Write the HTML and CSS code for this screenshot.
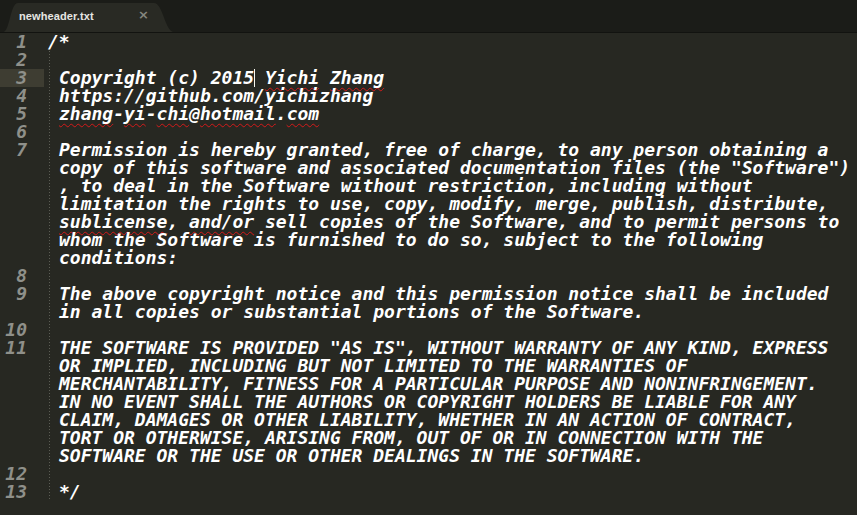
FILE: index.html
```html
<!DOCTYPE html>
<html>
<head>
<meta charset="utf-8">
<link rel="stylesheet" href="styles.css">
</head>
<body>
<div class="window">
  <div class="tabbar">
    <div class="tab">
      <svg class="tab-shape" width="176" height="29" viewBox="0 0 176 29">
        <path d="M2,29 C9,29 9,0 17,0 L153,0 C162,0 164,29 173,29 Z" fill="#292a24"/>
      </svg>
      <span class="tab-title">newheader.txt</span>
      <span class="tab-close">×</span>
    </div>
  </div>
  <div class="editor">
    <div class="ln">1</div><div class="code first"><div class="vl">/*</div></div>
    <div class="ln">2</div><div class="code guide"><div class="vl"> </div></div>
    <div class="ln current">3</div><div class="code guide"><div class="vl">Copyright (c) 2015<span class="caret"></span> <span class="sp">Yichi</span> <span class="sp">Zhang</span></div></div>
    <div class="ln">4</div><div class="code guide"><div class="vl">https://github.com/yichizhang</div></div>
    <div class="ln">5</div><div class="code guide"><div class="vl"><span class="sp">zhang</span>-<span class="sp">yi</span>-<span class="sp">chi</span>@<span class="sp">hotmail</span>.<span class="sp">com</span></div></div>
    <div class="ln">6</div><div class="code guide"><div class="vl"> </div></div>
    <div class="ln">7</div><div class="code guide">
      <div class="vl">Permission is hereby granted, free of charge, to any person obtaining a</div>
      <div class="vl">copy of this software and associated documentation files (the "Software")</div>
      <div class="vl">, to deal in the Software without restriction, including without</div>
      <div class="vl">limitation the rights to use, copy, modify, merge, publish, distribute,</div>
      <div class="vl"><span class="sp">sublicense</span>, <span class="sp">and/or</span> sell copies of the Software, and to permit persons to</div>
      <div class="vl">whom the Software is furnished to do so, subject to the following</div>
      <div class="vl">conditions:</div>
    </div>
    <div class="ln">8</div><div class="code guide"><div class="vl"> </div></div>
    <div class="ln">9</div><div class="code guide">
      <div class="vl">The above copyright notice and this permission notice shall be included</div>
      <div class="vl">in all copies or substantial portions of the Software.</div>
    </div>
    <div class="ln">10</div><div class="code guide"><div class="vl"> </div></div>
    <div class="ln">11</div><div class="code guide">
      <div class="vl">THE SOFTWARE IS PROVIDED "AS IS", WITHOUT WARRANTY OF ANY KIND, EXPRESS</div>
      <div class="vl">OR IMPLIED, INCLUDING BUT NOT LIMITED TO THE WARRANTIES OF</div>
      <div class="vl">MERCHANTABILITY, FITNESS FOR A PARTICULAR PURPOSE AND NONINFRINGEMENT.</div>
      <div class="vl">IN NO EVENT SHALL THE AUTHORS OR COPYRIGHT HOLDERS BE LIABLE FOR ANY</div>
      <div class="vl">CLAIM, DAMAGES OR OTHER LIABILITY, WHETHER IN AN ACTION OF CONTRACT,</div>
      <div class="vl">TORT OR OTHERWISE, ARISING FROM, OUT OF OR IN CONNECTION WITH THE</div>
      <div class="vl">SOFTWARE OR THE USE OR OTHER DEALINGS IN THE SOFTWARE.</div>
    </div>
    <div class="ln">12</div><div class="code guide"><div class="vl"> </div></div>
    <div class="ln">13</div><div class="code guide"><div class="vl">*/</div></div>
  </div>
</div>
</body>
</html>
```
FILE: styles.css
```css
html, body {
  margin: 0;
  padding: 0;
  background: #272822;
  overflow: hidden;
}
.window {
  width: 857px;
  height: 515px;
  background: #272822;
  overflow: hidden;
}
.tabbar {
  height: 32px;
  background: #1b1c18;
  border-bottom: 1px solid #121310;
  position: relative;
}
.tab {
  position: relative;
  width: 176px;
  height: 29px;
  top: 3px;
  left: 1px;
}
.tab-shape {
  position: absolute;
  left: 0;
  top: 0;
}
.tab-title {
  position: absolute;
  left: 18px;
  top: 7px;
  font-family: "Liberation Sans", Arial, sans-serif;
  font-weight: bold;
  font-size: 11px;
  color: #e6e6e2;
  letter-spacing: 0.1px;
}
.tab-close {
  position: absolute;
  left: 137px;
  top: 4px;
  font-family: "DejaVu Sans", sans-serif;
  font-weight: bold;
  font-size: 13px;
  color: #85867f;
}
.editor {
  display: grid;
  grid-template-columns: 44px 1fr;
  font-family: "DejaVu Sans Mono", monospace;
  font-style: italic;
  font-weight: bold;
  font-size: 18px;
  line-height: 18px;
  color: #ffffff;
}
.ln {
  text-align: right;
  padding-right: 17px;
  color: #8f908a;
  height: 18px;
}
.ln.current {
  background: #3e3d32;
}
.code.first {
  padding-left: 4px;
}
.code.guide {
  margin-left: 5px;
  padding-left: 10px;
  background-image: linear-gradient(to bottom, #5c5d55 1px, transparent 1px);
  background-size: 1px 3px;
  background-repeat: repeat-y;
}
.vl {
  height: 18px;
  white-space: pre;
}
.sp {
  text-decoration: underline wavy #d41a1a;
  text-decoration-thickness: 1px;
  text-underline-offset: 3px;
  text-decoration-skip-ink: none;
}
.caret {
  display: inline-block;
  width: 0;
  height: 18px;
  border-left: 1px solid #f8f8f0;
  margin-right: -1px;
  vertical-align: top;
}
```
